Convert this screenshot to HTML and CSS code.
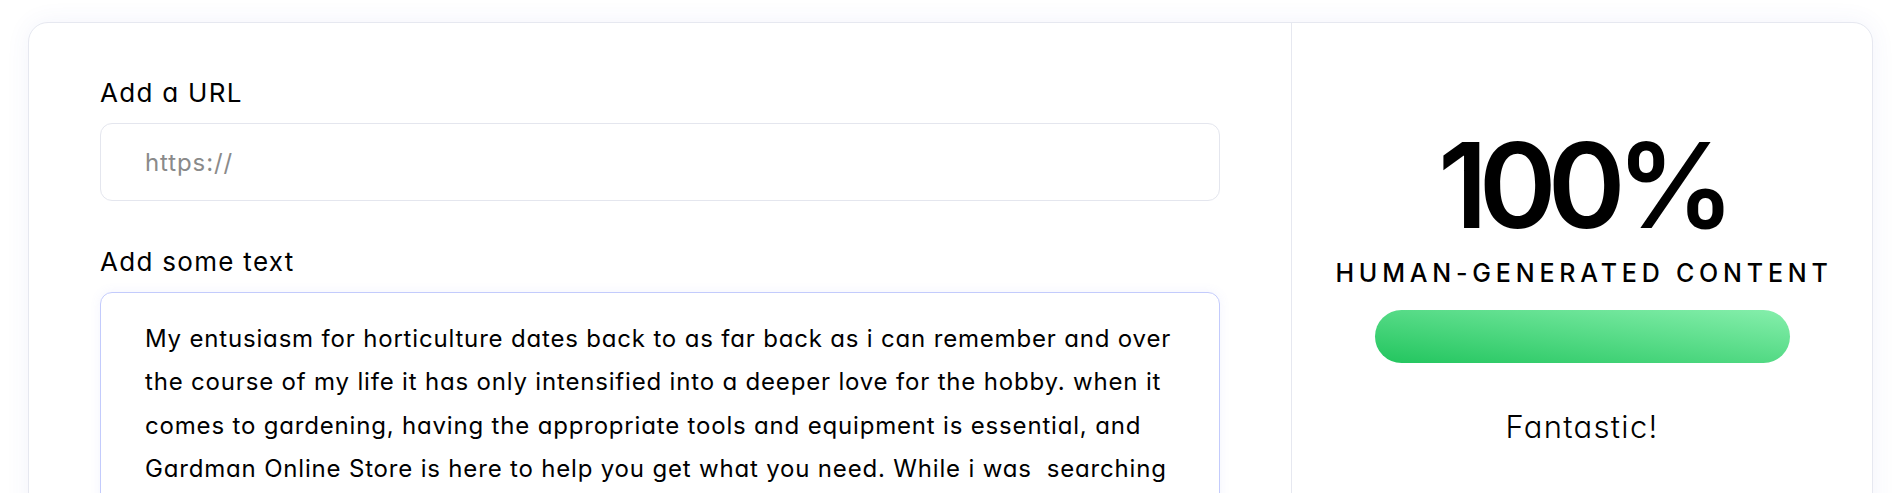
FILE: index.html
```html
<!DOCTYPE html>
<html lang="en">
<head>
<meta charset="utf-8">
<title>Content detector</title>
<link rel="stylesheet" href="styles.css">
</head>
<body>
<main class="card">
  <section class="input-panel">
    <label class="field-label" for="url">Add a URL</label>
    <div class="url-input" id="url"><span class="placeholder">https://</span></div>
    <label class="field-label field-label--text" for="text">Add some text</label>
    <div class="text-input" id="text">My entusiasm for horticulture dates back to as far back as i can remember and over<br>the course of my life it has only intensified into a deeper love for the hobby. when it<br>comes to gardening, having the appropriate tools and equipment is essential, and<br>Gardman Online Store is here to help you get what you need. While i was &nbsp;searching</div>
  </section>
  <section class="result-panel">
    <div class="score">100%</div>
    <div class="score-label">HUMAN-GENERATED CONTENT</div>
    <div class="score-bar"></div>
    <div class="verdict">Fantastic!</div>
  </section>
</main>
</body>
</html>
```

FILE: styles.css
```css
* { box-sizing: border-box; }

html, body {
  margin: 0;
  padding: 0;
  background: #ffffff;
}

body {
  font-family: "Inter", "Noto Sans", "DejaVu Sans", sans-serif;
  font-feature-settings: "cv11" 1;
  color: #000;
  overflow: hidden;
}

.card {
  margin: 22px 27px 0 28px;
  background: #fff;
  border: 1px solid #e6e8f0;
  border-radius: 20px;
  box-shadow: 0 0 24px rgba(70, 90, 200, 0.07);
  display: grid;
  grid-template-columns: 1262px 1fr;
  min-height: 560px;
}

.input-panel {
  padding: 50px 71px 0 71px;
  display: flex;
  flex-direction: column;
}

.field-label {
  display: block;
  font-size: 26px;
  line-height: 39px;
  font-weight: 400;
  letter-spacing: 1.3px;
}

.field-label--text {
  margin-top: 41px;
}

.url-input {
  margin-top: 11px;
  height: 78px;
  border: 1px solid #e4e6ee;
  border-radius: 12px;
  padding: 0 44px;
  display: flex;
  align-items: center;
  font-size: 24px;
  letter-spacing: 0.9px;
}

.placeholder {
  color: #8a8a8a;
}

.text-input {
  margin-top: 11px;
  min-height: 320px;
  border: 1px solid #c3cbfc;
  border-radius: 12px;
  box-shadow: 0 0 12px rgba(99, 110, 240, 0.08);
  padding: 24px 40px 24px 44px;
  font-size: 24px;
  line-height: 43.4px;
  letter-spacing: 0.82px;
  white-space: nowrap;
  color: #000;
}

.result-panel {
  border-left: 1px solid #e6e8f0;
  padding-top: 103px;
  display: flex;
  flex-direction: column;
  align-items: center;
}

.score {
  font-size: 118px;
  line-height: 118px;
  font-weight: 600;
  letter-spacing: -9px;
  padding-right: 0;
}

.score-label {
  margin-top: 17px;
  font-size: 25px;
  line-height: 25px;
  font-weight: 500;
  letter-spacing: 4.8px;
  padding-left: 4px;
}

.score-bar {
  margin-top: 24px;
  width: 415px;
  height: 53px;
  border-radius: 27px;
  background: linear-gradient(to top right, #22c55e, #86efac);
}

.verdict {
  margin-top: 48px;
  font-size: 31px;
  line-height: 31px;
  font-weight: 300;
  letter-spacing: 1.3px;
}
```
